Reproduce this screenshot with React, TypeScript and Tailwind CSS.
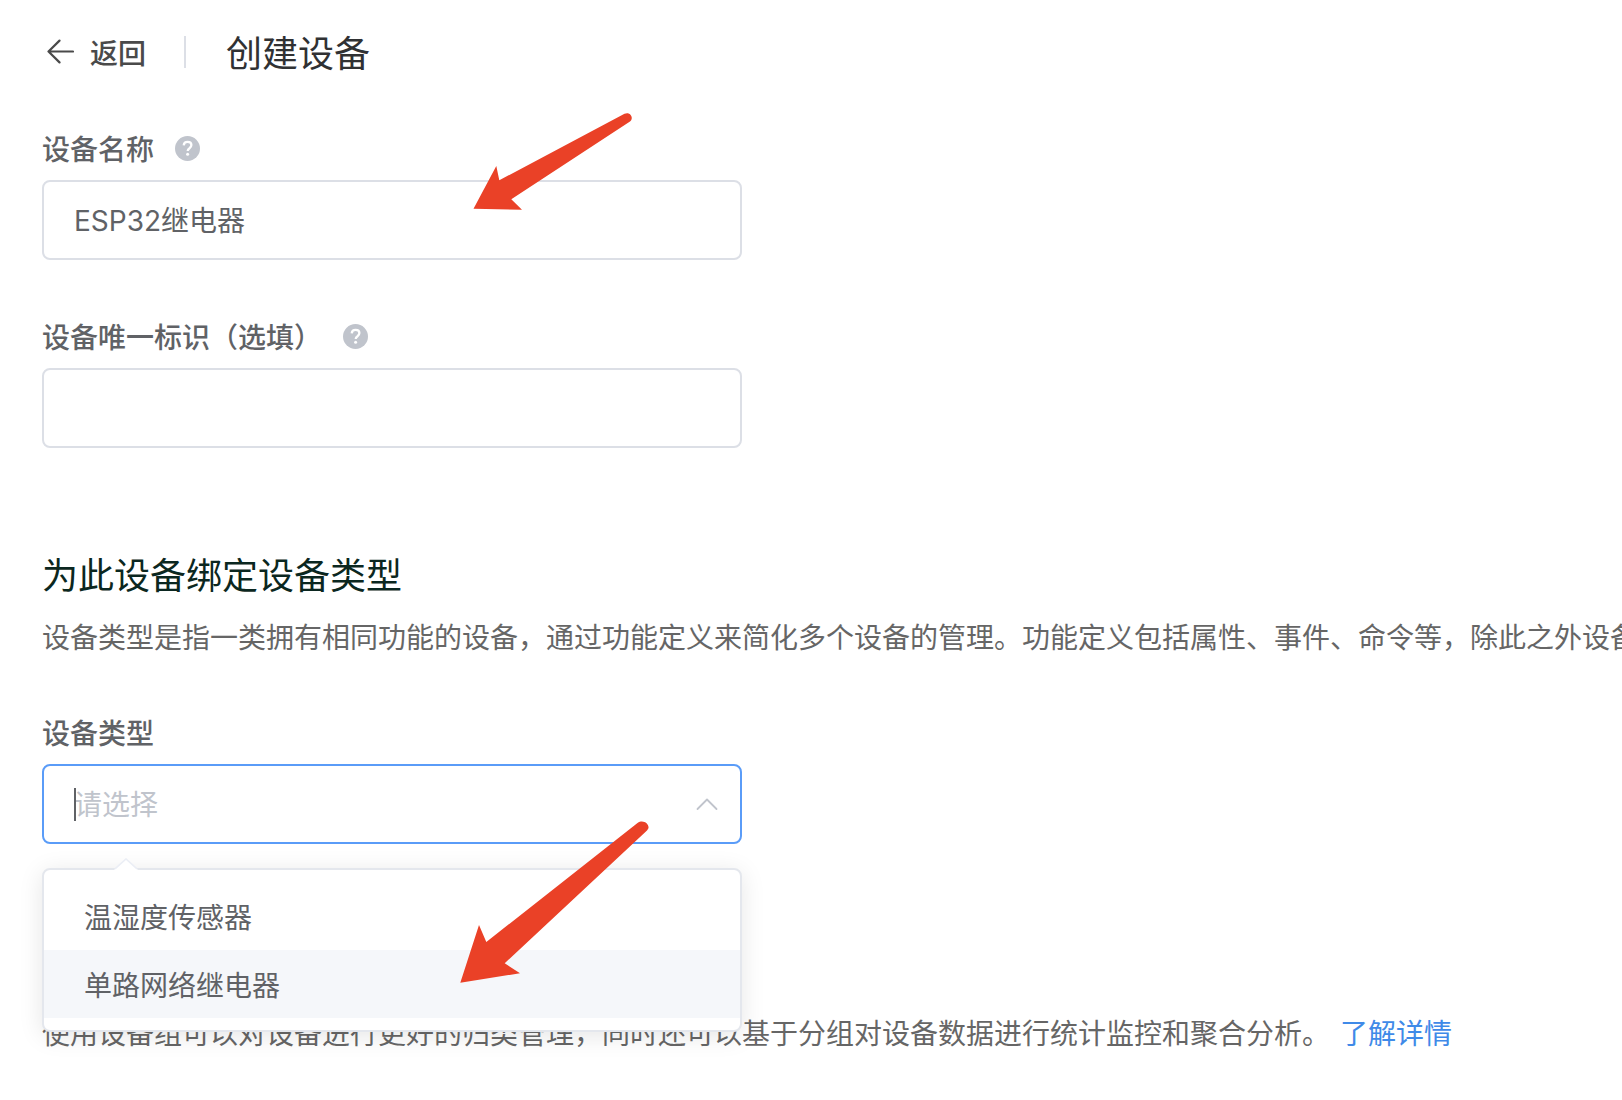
import { useState } from "react";
import clsx from "clsx";

const DEVICE_TYPES = ["温湿度传感器", "单路网络继电器"];

const FIELD_CLASS =
  "block h-20 w-full rounded-lg border-2 bg-white px-[30px] text-[28px] outline-none";

function HelpIcon() {
  return (
    <svg viewBox="0 0 25 25" className="mb-1 size-[25px] shrink-0" aria-hidden="true">
      <circle cx="12.5" cy="12.5" r="12.5" fill="#c0c4cc" />
      <path
        d="M8.700 9.300c.2-2.100 1.700-3.400 3.900-3.400s3.800 1.300 3.800 3.200c0 1.500-.8 2.300-1.900 3.100-1.300.9-1.800 1.400-1.800 2.800"
        fill="none"
        stroke="#fff"
        strokeWidth="2.300"
      />
      <circle cx="12.600" cy="18.300" r="1.500" fill="#fff" />
    </svg>
  );
}

interface FieldLabelProps {
  htmlFor: string;
  text: string;
  help?: boolean;
}

function FieldLabel({ htmlFor, text, help }: FieldLabelProps) {
  return (
    <div className="mb-2 flex h-11 items-center gap-[21px]">
      <label htmlFor={htmlFor} className="text-[28px] leading-11 font-medium text-[#606266]">
        {text}
      </label>
      {help && <HelpIcon />}
    </div>
  );
}

export default function App() {
  const [name, setName] = useState("ESP32继电器");
  const [identifier, setIdentifier] = useState("");
  const [deviceType, setDeviceType] = useState("");
  const [active, setActive] = useState(1);

  return (
    <main className="relative min-h-screen overflow-hidden bg-white px-[42px] pt-7 pb-9 font-['Inter','Noto_Sans_CJK_SC',sans-serif]">
      <header className="mb-12 flex h-[52px] items-center">
        <button type="button" className="flex items-center gap-4 pl-1 text-[28px] leading-10 font-medium text-[#4a4a4a]">
          <svg viewBox="0 0 28 28" className="mb-1 size-7" fill="none" stroke="#4a4a4a" strokeWidth="2.2" aria-hidden="true">
            <path d="M27 13.500H2.500M13.500 2.600 2.500 13.500 13.500 24.400" strokeLinecap="round" strokeLinejoin="round" />
          </svg>
          返回
        </button>
        <span className="mr-10 mb-1 ml-[38px] h-8 w-0.5 bg-[#dcdfe6]" />
        <h1 className="text-4xl leading-[48px] text-[#303133]">创建设备</h1>
      </header>

      <form className="w-[700px] max-w-full">
        <FieldLabel htmlFor="device-name" text="设备名称" help />
        <input
          id="device-name"
          type="text"
          value={name}
          onChange={(e) => setName(e.target.value)}
          className={clsx(FIELD_CLASS, "mb-14 border-[#dcdfe6] pb-0.5 text-[#606266]")}
        />
        <FieldLabel htmlFor="device-id" text="设备唯一标识（选填）" help />
        <input
          id="device-id"
          type="text"
          value={identifier}
          onChange={(e) => setIdentifier(e.target.value)}
          className={clsx(FIELD_CLASS, "border-[#dcdfe6] pb-0.5 text-[#606266]")}
        />
      </form>

      <section className="mt-[104px]">
        <h2 className="text-4xl leading-[48px] text-[#0b2720]">为此设备绑定设备类型</h2>
        <p className="mt-4 mb-[52px] text-[28px] leading-11 whitespace-nowrap text-[#666666]">
          设备类型是指一类拥有相同功能的设备，通过功能定义来简化多个设备的管理。功能定义包括属性、事件、命令等，除此之外设备
        </p>
        <div className="w-[700px] max-w-full">
          <FieldLabel htmlFor="device-type" text="设备类型" />
          <div className="relative">
            <select
              id="device-type"
              value={deviceType}
              onChange={(e) => setDeviceType(e.target.value)}
              className={clsx(
                FIELD_CLASS,
                "appearance-none border-[#5a9cf8] pt-0.5",
                deviceType ? "text-[#606266]" : "text-[#c0c4cc]"
              )}
            >
              <option value="">请选择</option>
              {DEVICE_TYPES.map((type) => (
                <option key={type}>{type}</option>
              ))}
            </select>
            <span className="absolute top-6 left-8 h-[33px] w-0.5 bg-[#606266]" />
            <svg
              viewBox="0 0 22 14"
              className="pointer-events-none absolute top-[33px] right-6 h-3.5 w-[22px]"
              fill="none"
              stroke="#c0c4cc"
              strokeWidth="1.8"
              strokeLinecap="round"
              strokeLinejoin="round"
              aria-hidden="true"
            >
              <path d="M1.500 12 11 2.500 20.500 12" />
            </svg>

            <div className="absolute top-full left-0 z-10 mt-6 w-full rounded-lg border-2 border-[#e4e7ed] bg-white py-3 shadow-[0_4px_24px_rgba(0,0,0,0.1)]">
              <svg viewBox="0 0 24 12" className="absolute -top-3 left-[70px] h-3 w-6" aria-hidden="true">
                <path d="M0 12 12 1 24 12Z" fill="#fff" />
                <path d="M1 10.800 12 1 23 10.800" fill="none" stroke="#ebeef5" strokeWidth="1.600" />
              </svg>
              <ul role="listbox" aria-label="设备类型">
                {DEVICE_TYPES.map((type, i) => (
                  <li
                    key={type}
                    role="option"
                    aria-selected={deviceType === type}
                    onMouseEnter={() => setActive(i)}
                    onClick={() => setDeviceType(type)}
                    className={clsx(
                      "cursor-pointer px-10 pt-1 text-[28px] leading-16 text-[#606266]",
                      active === i && "bg-[#f5f7fa]"
                    )}
                  >
                    {type}
                  </li>
                ))}
              </ul>
            </div>
          </div>
        </div>
      </section>

      <p className="mt-[168px] text-[28px] leading-11 whitespace-nowrap text-[#666666]">
        使用设备组可以对设备进行更好的归类管理，同时还可以基于分组对设备数据进行统计监控和聚合分析。
        <a href="#" className="ml-2.5 text-[#3f8ae8]">
          了解详情
        </a>
      </p>

      {/* hand-drawn pointers floating over the form */}
      <svg
        viewBox="0 0 160 98"
        className="pointer-events-none absolute top-[112px] left-[473px] z-20 h-[98px] w-40"
        fill="#ea4127"
        aria-hidden="true"
      >
        <path d="M.5 96.700 23.300 54 26.300 68.300 151.500 1.800C156.500-.7 160.500 4.500 158 8.500L157 9.500 38.300 87.300 49 97.700Z" />
      </svg>
      <svg
        viewBox="0 0 190 164"
        className="pointer-events-none absolute top-[820px] left-[459px] z-20 h-[164px] w-[190px]"
        fill="#ea4127"
        aria-hidden="true"
      >
        <path d="M1.300 162.700 20 105 27.300 122 178.500 3C185-1.500 191.500 5.500 189 9L188 10.500 45.700 143.300 61 153.300Z" />
      </svg>
    </main>
  );
}
